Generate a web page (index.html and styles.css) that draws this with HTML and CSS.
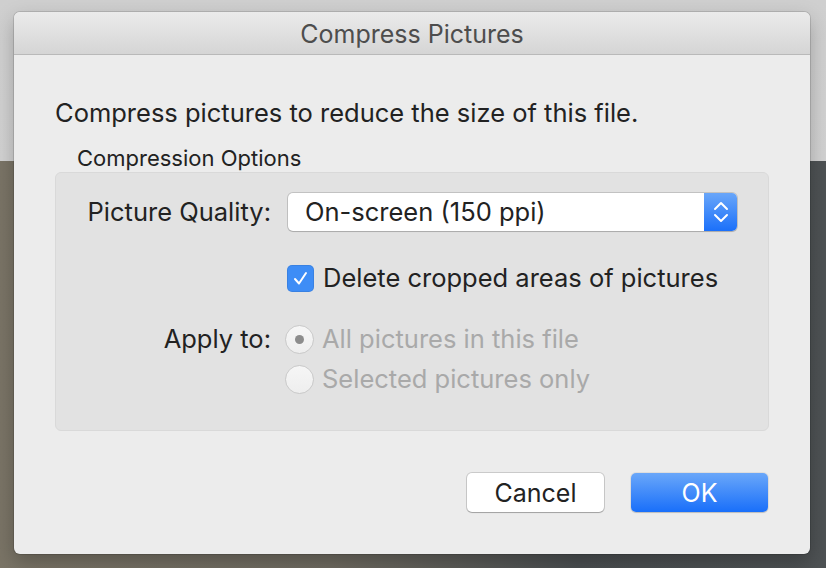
FILE: index.html
```html
<!DOCTYPE html>
<html>
<head>
<meta charset="utf-8">
<link rel="stylesheet" href="styles.css">
</head>
<body>
<div class="dialog">
  <div class="titlebar">Compress Pictures</div>
  <div class="content">
    <p class="intro">Compress pictures to reduce the size of this file.</p>
    <div class="legend">Compression Options</div>
    <div class="group">
      <div class="row row-quality">
        <div class="label">Picture Quality:</div>
        <div class="popup">
          <span class="popup-text">On-screen (150 ppi)</span>
          <span class="stepper">
            <svg width="16" height="26" viewBox="0 0 16 26"><path d="M2 10 L8 4 L14 10" fill="none" stroke="#fff" stroke-width="2" stroke-linecap="round" stroke-linejoin="round"/><path d="M2 16 L8 22 L14 16" fill="none" stroke="#fff" stroke-width="2" stroke-linecap="round" stroke-linejoin="round"/></svg>
          </span>
        </div>
      </div>
      <div class="row row-check">
        <div class="label"></div>
        <label class="check">
          <span class="checkbox"><svg width="19" height="19" viewBox="0 0 19 19"><path d="M4 10 L8 14.5 L15 4" fill="none" stroke="#fff" stroke-width="2" stroke-linecap="round" stroke-linejoin="round"/></svg></span>
          <span>Delete cropped areas of pictures</span>
        </label>
      </div>
      <div class="row row-radio">
        <div class="label">Apply to:</div>
        <div class="radio disabled"><span class="radio-dot on"></span><span>All pictures in this file</span></div>
      </div>
      <div class="row row-radio2">
        <div class="label"></div>
        <div class="radio disabled"><span class="radio-dot"></span><span>Selected pictures only</span></div>
      </div>
    </div>
    <div class="buttons">
      <button class="btn cancel">Cancel</button>
      <button class="btn ok">OK</button>
    </div>
  </div>
</div>
</body>
</html>
```
FILE: styles.css
```css
* { box-sizing: border-box; }
html, body { margin: 0; height: 100%; }
body {
  font-family: Inter, "Noto Sans", sans-serif;
  background:
    linear-gradient(to bottom, #cfcfcf 0, #d2d2d2 161px, transparent 161px),
    linear-gradient(to right, #7a7466 0, #6e6a60 40%, #4a4e50 70%, #4e5254 100%);
  padding: 12px 0 0 14px;
  overflow: hidden;
}
.dialog {
  width: 796px;
  height: 542px;
  background: #ececec;
  border-radius: 6px;
  overflow: hidden;
  box-shadow: 0 0 0 1px rgba(0,0,0,0.12), 0 8px 20px rgba(0,0,0,0.25);
  display: flex;
  flex-direction: column;
}
.titlebar {
  height: 43px;
  flex: none;
  background: linear-gradient(to bottom, #ebebeb, #d5d5d5);
  border-bottom: 1px solid #b9b9b9;
  color: #4d4d4d;
  font-size: 25px;
  line-height: 30px;
  display: flex;
  align-items: center;
  justify-content: center;
  padding-top: 2px;
}
.content {
  padding: 44px 41px 0 41px;
  color: #222;
}
.intro {
  margin: 0;
  font-size: 25.5px;
  line-height: 28px;
}
.legend {
  margin-top: 19px;
  padding-left: 22px;
  font-size: 22px;
  line-height: 24px;
}
.group {
  margin-top: 2px;
  height: 259px;
  background: #e2e2e2;
  border: 1px solid #d9d9d9;
  border-radius: 6px;
  padding-top: 20px;
}
.row {
  display: grid;
  grid-template-columns: 215px 1fr;
  column-gap: 17px;
  align-items: center;
  font-size: 25.5px;
  line-height: 30px;
}
.label { text-align: right; color: #222; }
.popup {
  width: 449px;
  height: 38px;
  background: #fff;
  border-radius: 5px;
  box-shadow: 0 0 0 1px rgba(0,0,0,0.14), 0 1px 1px rgba(0,0,0,0.12);
  display: flex;
  align-items: center;
  justify-content: space-between;
  overflow: hidden;
}
.popup-text { padding-left: 17px; }
.stepper {
  width: 33px;
  height: 38px;
  background: linear-gradient(to bottom, #69a6f9, #1b70fa);
  display: flex;
  align-items: center;
  justify-content: center;
}
.row-check { margin-top: 32px; }
.check {
  display: flex;
  align-items: center;
  gap: 9px;
  margin-left: -1px;
}
.checkbox {
  width: 27px;
  height: 27px;
  border-radius: 5px;
  background: #3e8df6;
  box-shadow: inset 0 0 0 1px rgba(0,0,0,0.08);
  display: flex;
  align-items: center;
  justify-content: center;
}
.row-radio { margin-top: 31px; }
.row-radio2 { margin-top: 10px; }
.radio {
  display: flex;
  align-items: center;
  gap: 8px;
  margin-left: -3px;
}
.radio.disabled { color: #a9a9a9; }
.radio-dot {
  width: 29px;
  height: 29px;
  border-radius: 50%;
  background: linear-gradient(to bottom, #f6f6f6, #eeeeee);
  border: 1px solid #c9c9c9;
  display: flex;
  align-items: center;
  justify-content: center;
}
.radio-dot.on::after {
  content: "";
  width: 9px;
  height: 9px;
  border-radius: 50%;
  background: #8c8c8c;
}
.buttons {
  margin-top: 42px;
  display: flex;
  justify-content: flex-end;
  gap: 27px;
  padding-right: 1px;
}
.btn {
  width: 137px;
  height: 39px;
  border: none;
  border-radius: 5px;
  font-family: inherit;
  font-size: 25px;
  padding: 0;
}
.cancel {
  background: #fff;
  color: #222;
  box-shadow: 0 0 0 1px rgba(0,0,0,0.14), 0 1px 1px rgba(0,0,0,0.2);
}
.ok {
  background: linear-gradient(to bottom, #6aa7f9, #196ffa);
  color: #fff;
  box-shadow: 0 0 0 1px rgba(0,0,0,0.06), 0 1px 1px rgba(0,0,0,0.15);
}
```
